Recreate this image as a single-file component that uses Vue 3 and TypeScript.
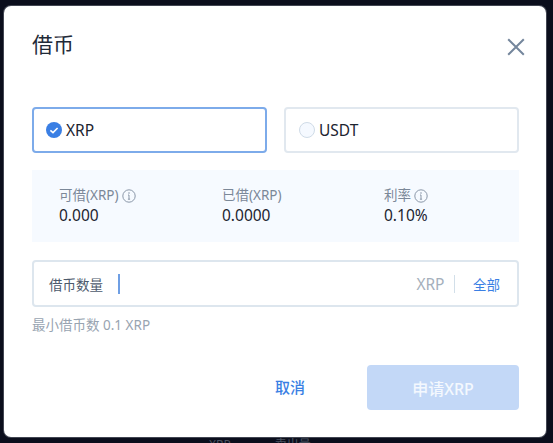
<script setup lang="ts">
interface Stat { label: string; value: string; info: boolean; width: string }
const stats: Stat[] = [
  { label: '可借(XRP)', value: '0.000', info: true, width: '163px' },
  { label: '已借(XRP)', value: '0.0000', info: false, width: '162px' },
  { label: '利率', value: '0.10%', info: true, width: '100px' },
]
</script>

<template>
  <div class="page">
    <div class="behind">
      <span class="behind-unit">XRP</span>
      <span class="behind-label">卖出量</span>
    </div>
    <section class="modal">
      <header class="head">
        <h1 class="title">借币</h1>
        <button class="close" aria-label="关闭">
          <svg width="18" height="18" viewBox="0 0 18 18"><path d="M1.2 1.2 16.8 16.8M16.8 1.2 1.2 16.8" stroke="#74869c" stroke-width="2" fill="none"/></svg>
        </button>
      </header>

      <div class="choices">
        <div class="choice active">
          <svg class="mark" width="16" height="16" viewBox="0 0 16 16"><circle cx="8" cy="8" r="8" fill="#3a7fe4"/><path d="M4.4 8.3 7 10.6 11.6 6" stroke="#fff" stroke-width="1.6" fill="none"/></svg>
          <span>XRP</span>
        </div>
        <div class="choice">
          <span class="radio"></span>
          <span>USDT</span>
        </div>
      </div>

      <div class="stats">
        <div v-for="s in stats" :key="s.label" class="stat" :style="{ width: s.width }">
          <div class="stat-label">
            <span>{{ s.label }}</span>
            <svg v-if="s.info" width="14" height="14" viewBox="0 0 14 14"><circle cx="7" cy="7" r="6.2" stroke="#8a97a8" fill="none"/><path d="M7 6v4.2M5.9 10.2h2.2M6 6h1" stroke="#8a97a8" fill="none"/><circle cx="7" cy="4" r=".8" fill="#8a97a8"/></svg>
          </div>
          <div class="stat-value">{{ s.value }}</div>
        </div>
      </div>

      <div class="field">
        <span class="field-label">借币数量</span>
        <span class="caret"></span>
        <span class="unit">XRP</span>
        <span class="divider"></span>
        <span class="all">全部</span>
      </div>
      <p class="hint">最小借币数 0.1 XRP</p>

      <footer class="actions">
        <button class="cancel">取消</button>
        <button class="submit">申请XRP</button>
      </footer>
    </section>
  </div>
</template>

<style scoped>
.page {
  position: relative;
  width: 553px;
  height: 443px;
  box-sizing: border-box;
  padding: 6px 7px 6px 4px;
  background: #0b0e1c;
  font-family: "Noto Sans", "Noto Sans CJK SC", sans-serif;
  overflow: hidden;
}
.behind {
  position: absolute;
  left: 209px;
  top: 437px;
  display: flex;
  gap: 44px;
  font-size: 12px;
  line-height: 16px;
  color: #4a5260;
}
.modal {
  position: relative;
  width: 542px;
  height: 431px;
  box-sizing: border-box;
  padding: 0 27px 0 28px;
  background: #fff;
  border-radius: 7px;
  box-shadow: 0 0 0 1px rgba(150, 155, 165, 0.4);
  display: flex;
  flex-direction: column;
}
.head {
  height: 101px;
  display: flex;
  justify-content: space-between;
  align-items: flex-start;
}
.title {
  margin: 22px 0 0 0;
  font-size: 21px;
  line-height: 32px;
  font-weight: 400;
  color: #1f2a38;
}
.close {
  margin: 32px -6px 0 0;
  padding: 0;
  width: 18px;
  height: 18px;
  border: 0;
  background: none;
  display: block;
}
.choices {
  display: flex;
  justify-content: space-between;
}
.choice {
  width: 235px;
  height: 46px;
  box-sizing: border-box;
  border: 2px solid #e1e8ef;
  border-radius: 4px;
  display: flex;
  align-items: center;
  gap: 4px;
  padding-left: 12px;
  font-size: 15.5px;
  color: #1c2430;
}
.choice.active {
  border-color: #7dabea;
}
.mark { flex: none; }
.radio {
  flex: none;
  width: 14px;
  height: 14px;
  margin-left: 1px;
  border: 1px solid #cfdbe7;
  border-radius: 50%;
  background: #f5f9ff;
}
.stats {
  margin-top: 17px;
  height: 72px;
  box-sizing: border-box;
  padding: 16px 0 0 27px;
  background: #f6faff;
  display: flex;
}
.stat-label {
  display: flex;
  align-items: center;
  gap: 3px;
  font-size: 13.5px;
  line-height: 19px;
  color: #7b8898;
}
.stat-value {
  font-size: 15.5px;
  line-height: 21px;
  color: #1c2430;
}
.field {
  margin-top: 18px;
  height: 47px;
  box-sizing: border-box;
  border: 2px solid #dde6ee;
  border-radius: 4px;
  display: flex;
  align-items: center;
  padding: 0 17px 0 15px;
}
.field-label {
  font-size: 13.5px;
  color: #4c5a6c;
}
.caret {
  width: 2px;
  height: 20px;
  margin-left: 15px;
  background: #6f9fe4;
}
.unit {
  margin-left: auto;
  font-size: 15.5px;
  color: #a5b0bc;
}
.divider {
  width: 1.5px;
  height: 18px;
  margin: 0 18px 0 9px;
  background: #d2dfe9;
}
.all {
  font-size: 13.5px;
  color: #3a7fe4;
}
.hint {
  margin: 8px 0 0;
  font-size: 13.5px;
  line-height: 20px;
  color: #98a4b1;
}
.actions {
  margin-top: 30px;
  display: flex;
  justify-content: flex-end;
  align-items: center;
}
.cancel {
  width: 152px;
  height: 45px;
  padding: 0 2px 2px 0;
  border: 0;
  background: none;
  font: inherit;
  font-size: 15px;
  font-weight: 500;
  color: #3a7fe4;
}
.submit {
  width: 152px;
  height: 45px;
  padding: 0;
  border: 0;
  border-radius: 4px;
  background: #c3d8f7;
  font: inherit;
  font-size: 16px;
  font-weight: 500;
  color: #f4f8fe;
}
</style>
